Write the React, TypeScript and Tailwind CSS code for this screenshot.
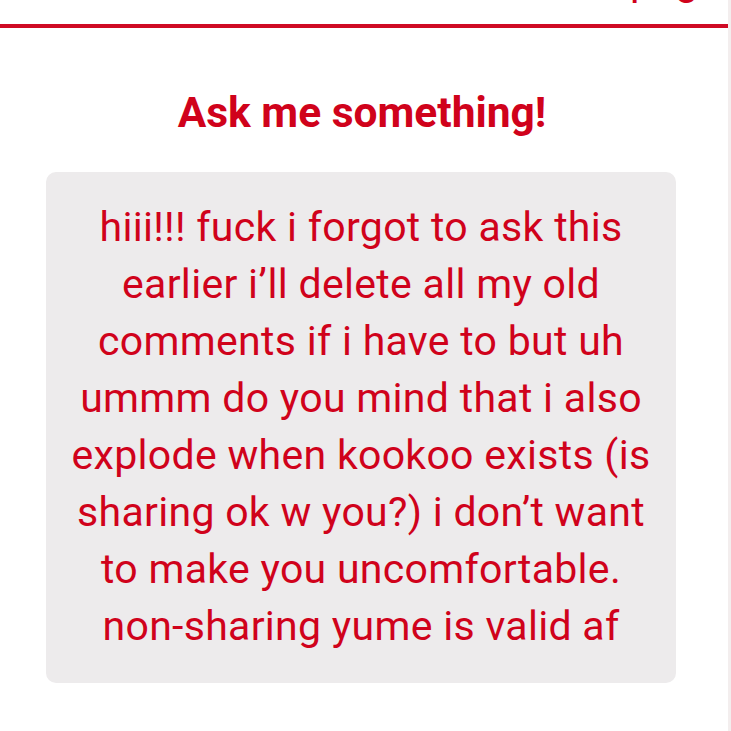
export default function App() {
  const lines = [
    'hiii!!! fuck i forgot to ask this',
    "earlier i\u2019ll delete all my old",
    'comments if i have to but uh',
    'ummm do you mind that i also',
    'explode when kookoo exists (is',
    "sharing ok w you?) i don\u2019t want",
    'to make you uncomfortable.',
    'non-sharing yume is valid af',
  ];

  return (
    <div className="w-[731px] h-[731px] overflow-hidden bg-white font-['Roboto',sans-serif] flex">
      <div className="w-[728px] flex flex-col">
        {/* top nav, scrolled mostly out of view */}
        <div className="h-[24px] relative overflow-hidden">
          <div className="absolute right-[8px] bottom-[22px] text-[41px] leading-none text-[#d0021b] whitespace-nowrap">
            page
          </div>
        </div>
        <div className="h-[4px] bg-[#cf0a24]" />

        <h1 className="mt-[60px] pr-[4px] text-center text-[42.5px] leading-[50px] font-bold text-[#d0021b]">
          Ask me something!
        </h1>

        <div className="mt-[34px] ml-[46px] w-[630px] rounded-[10px] bg-[#edebec] px-2 pt-[27px] pb-[28px]">
          <p className="text-center text-[41px] leading-[57px] tracking-[0.3px] text-[#d0021b]">
            {lines.map((l, i) => (
              <span key={i} className="block whitespace-nowrap">
                {l}
              </span>
            ))}
          </p>
        </div>
      </div>
      <div className="w-[3px] bg-[#f3eeee]" />
    </div>
  );
}
